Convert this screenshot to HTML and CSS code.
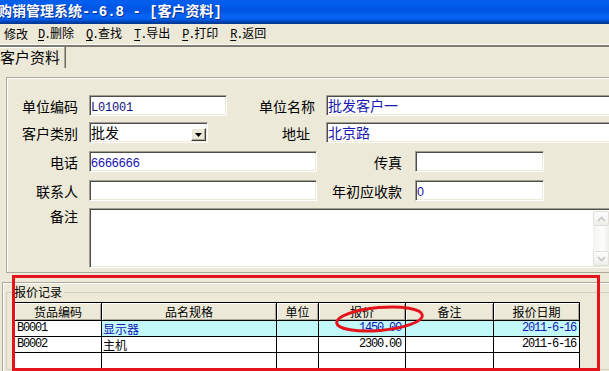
FILE: index.html
```html
<!DOCTYPE html>
<html lang="zh-CN">
<head>
<meta charset="utf-8">
<title>客户资料</title>
<link rel="stylesheet" href="styles.css">
</head>
<body>
<div class="window">
  <div class="titlebar"><span class="title">购销管理系统--6.8 - [客户资料]</span></div>
  <div class="menubar">
    <span class="mi first">修改</span>
    <span class="mi"><span class="key"><u>D</u>.</span>删除</span>
    <span class="mi"><span class="key"><u>Q</u>.</span>查找</span>
    <span class="mi"><span class="key"><u>T</u>.</span>导出</span>
    <span class="mi"><span class="key"><u>P</u>.</span>打印</span>
    <span class="mi"><span class="key"><u>R</u>.</span>返回</span>
  </div>
  <div class="sep"></div>
  <div class="tabs"><div class="tab">客户资料</div></div>

  <div class="panel">
    <div class="row">
      <span class="lbl l1">单位编码</span>
      <div class="field w138"><span class="mono">L01001</span></div>
      <span class="lbl l88">单位名称</span>
      <div class="field wide">批发客户一</div>
    </div>
    <div class="row r2">
      <span class="lbl l1">客户类别</span>
      <div class="field combo w119">
        <span class="combo-text">批发</span>
        <span class="drop"><svg width="7" height="4" viewBox="0 0 7 4"><path d="M0 0h7L3.5 4z" fill="#000"/></svg></span>
      </div>
      <span class="lbl l102">地址</span>
      <div class="field wide">北京路</div>
    </div>
    <div class="row r3">
      <span class="lbl l1">电话</span>
      <div class="field w228"><span class="sans">6666666</span></div>
      <span class="lbl l85">传真</span>
      <div class="field w129"></div>
    </div>
    <div class="row r4">
      <span class="lbl l1">联系人</span>
      <div class="field w228"></div>
      <span class="lbl l85">年初应收款</span>
      <div class="field w129"><span class="sans">0</span></div>
    </div>
    <div class="row r5">
      <span class="lbl l1 memo-lbl">备注</span>
      <div class="field memo">
        <div class="memo-body"></div>
        <div class="vscroll">
          <span class="sbtn"><svg width="9" height="6" viewBox="0 0 9 6"><path d="M1 5L4.5 1.5L8 5" fill="none" stroke="#c2c5cc" stroke-width="1.6"/></svg></span>
          <span class="strack"></span>
          <span class="sbtn"><svg width="9" height="6" viewBox="0 0 9 6"><path d="M1 1L4.5 4.5L8 1" fill="none" stroke="#c2c5cc" stroke-width="1.6"/></svg></span>
        </div>
      </div>
    </div>
  </div>

  <div class="lower">
    <fieldset class="group">
      <legend>报价记录</legend>
      <div class="grid">
        <div class="hc">货品编码</div>
        <div class="hc">品名规格</div>
        <div class="hc">单位</div>
        <div class="hc">报价</div>
        <div class="hc">备注</div>
        <div class="hc">报价日期</div>

        <div class="c mono pl">B0001</div>
        <div class="c sel blue">显示器</div>
        <div class="c sel"></div>
        <div class="c sel mono blue num">1450.00</div>
        <div class="c sel"></div>
        <div class="c sel mono blue date">2011-6-16</div>

        <div class="c mono pl">B0002</div>
        <div class="c">主机</div>
        <div class="c"></div>
        <div class="c mono num">2300.00</div>
        <div class="c"></div>
        <div class="c mono date">2011-6-16</div>

        <div class="c"></div>
        <div class="c"></div>
        <div class="c"></div>
        <div class="c"></div>
        <div class="c"></div>
        <div class="c"></div>
      </div>
    </fieldset>
  </div>

  <div class="redbox"></div>
  <svg class="ring" width="96" height="34" viewBox="0 0 96 34">
    <ellipse cx="47.5" cy="17" rx="43" ry="11.5" transform="rotate(-5 47.5 17)" fill="none" stroke="#e3141c" stroke-width="3"/>
  </svg>
</div>
</body>
</html>
```

FILE: styles.css
```css
* { box-sizing: border-box; }

body {
  margin: 0;
  background: #ece9d8;
}

.window {
  position: relative;
  width: 609px;
  height: 371px;
  overflow: hidden;
  background: #ece9d8;
  font-family: "Noto Sans CJK SC", sans-serif;
  color: #000;
}

/* ---- title bar ---- */
.titlebar {
  height: 24px;
  display: flex;
  align-items: center;
  background: linear-gradient(to bottom,
    #0a5de8 0px, #0060f0 2px, #0058e8 6px, #0055e2 11px,
    #0866f6 16px, #0460f0 19px, #004cc8 21px, #0040a8 22px, #003590 24px);
}
.title {
  margin-left: -2px;
  font-family: "Liberation Mono", "Noto Sans CJK SC", monospace;
  font-weight: bold;
  font-size: 14px;
  line-height: 24px;
  color: #fff;
  white-space: nowrap;
  text-shadow: 1px 1px 0 #0b2f8c;
}

/* ---- menu bar ---- */
.menubar {
  height: 20px;
  display: flex;
  align-items: center;
  gap: 12px;
  padding-left: 4px;
  font-size: 12px;
  line-height: 20px;
}
.mi { white-space: nowrap; }
.mi.first { margin-right: -2px; }
.key {
  font-family: "Liberation Mono", monospace;
  letter-spacing: -1.2px;
}
.key u { text-underline-offset: 2px; }

.sep {
  height: 3px;
  border-top: 1px solid #fbfbf7;
  border-bottom: 2px solid #7d7b72;
}

/* ---- tab ---- */
.tabs {
  height: 21px;
  display: flex;
}
.tab {
  font-size: 15px;
  line-height: 20px;
  padding: 0 5px 0 0;
  border-right: 1px solid #6f6d64;
  box-shadow: inset -1px 0 0 #aca899, inset 0 1px 0 #fff;
  white-space: nowrap;
}

/* ---- form panel ---- */
.panel {
  margin: 9px 0 0 6px;
  width: 640px;
  height: 196px;
  padding-top: 17px;
  border: 1px solid #aca899;
  box-shadow: inset 1px 1px 0 #fff;
}
.row {
  display: flex;
  align-items: center;
  height: 21px;
}
.r2 { margin-top: 6px; }
.r3 { margin-top: 8px; }
.r4 { margin-top: 8px; }
.r5 { margin-top: 7px; height: 60px; align-items: flex-start; }

.lbl {
  flex: none;
  font-size: 14px;
  line-height: 20px;
  text-align: right;
  white-space: nowrap;
}
.l1 { width: 71px; margin-right: 11px; }
.l88 { width: 88px; margin-right: 11px; }
.l102 { width: 102px; margin-right: 16px; }
.l85 { width: 85px; margin-right: 13px; }
.memo-lbl { line-height: 14px; margin-top: 1px; }

.field {
  flex: none;
  height: 21px;
  padding: 0 1px;
  background: #fff;
  border: 1px solid;
  border-color: #a2a096 #fff #fff #a2a096;
  box-shadow: inset 1px 1px 0 #4e4d48, inset -1px -1px 0 #ece9d8;
  font-size: 14px;
  line-height: 19px;
  color: #1818b4;
  white-space: nowrap;
  overflow: hidden;
}
.w138 { width: 138px; }
.w119 { width: 119px; }
.w228 { width: 228px; }
.w129 { width: 129px; }
.wide { width: 300px; }

.mono {
  font-family: "Liberation Mono", monospace;
  font-size: 12px;
  letter-spacing: -0.2px;
}
.field .mono { color: #101080; }
.sans {
  font-family: "Liberation Sans", sans-serif;
  font-size: 12.5px;
}

/* combo */
.combo {
  display: flex;
  align-items: flex-end;
  justify-content: space-between;
  padding-bottom: 1px;
  padding-right: 1px;
}
.combo-text { color: #000; line-height: 18px; align-self: center; }
.drop {
  width: 15px;
  height: 13px;
  display: flex;
  align-items: center;
  justify-content: center;
  background: #ece9d8;
  border: 1px solid;
  border-color: #fff #404040 #404040 #fff;
  box-shadow: inset -1px -1px 0 #aca899;
}

/* memo */
.memo {
  width: 522px;
  height: 60px;
  display: flex;
  padding: 2px 0 1px 1px;
}
.memo-body { flex: 1; }
.vscroll {
  width: 16px;
  margin-right: 1px;
  display: flex;
  flex-direction: column;
  background: linear-gradient(to right, #f3f3ef, #fdfdfb 60%, #eeeee8);
}
.sbtn {
  height: 15px;
  display: flex;
  align-items: center;
  justify-content: center;
  border: 1px solid #e0e0d8;
  border-radius: 2px;
  background: linear-gradient(to bottom, #fcfcfb, #eeeee9);
}
.strack { flex: 1; }

/* ---- lower group ---- */
.lower {
  margin: 9px 0 0 2px;
  width: 640px;
  height: 100px;
  padding: 2px 0 0 3px;
  border-top: 1px solid #aca899;
  border-left: 1px solid #aca899;
  box-shadow: inset 1px 1px 0 #fff;
}
.group {
  margin: 0;
  min-width: 0;
  width: 630px;
  padding: 3px 0 0 7px;
  border: 1px solid #d0d0bf;
}
.group legend {
  padding: 0 2px 0 0;
  font-size: 12px;
  line-height: 14px;
}

.grid {
  display: grid;
  grid-template-columns: 86px 174px 41px 86px 87px 85px;
  grid-template-rows: 17px;
  grid-auto-rows: 15px;
  gap: 1px;
  padding: 1px;
  width: max-content;
  background: #000;
}
.hc {
  background: #ece9d8;
  box-shadow: inset 1px 1px 0 #fff, inset -1px -1px 0 #aca899;
  font-size: 12px;
  line-height: 17px;
  text-align: center;
  white-space: nowrap;
}
.c {
  background: #fff;
  font-size: 12px;
  line-height: 15px;
  white-space: nowrap;
  overflow: hidden;
  padding-left: 1px;
}
.c.mono { letter-spacing: -1.2px; }
.c.pl { padding-left: 2px; }
.c.sel { background: #c2f8f8; }
.c.blue { color: #1414b4; }
.c.num { text-align: right; padding-right: 4px; }
.c.date { text-align: right; padding-right: 3px; }

/* ---- annotations over the screenshot ---- */
.redbox {
  position: absolute;
  left: 12px;
  top: 275px;
  width: 588px;
  height: 96px;
  border: 3px solid #e3141c;
}
.ring {
  position: absolute;
  left: 332px;
  top: 302px;
}
```
